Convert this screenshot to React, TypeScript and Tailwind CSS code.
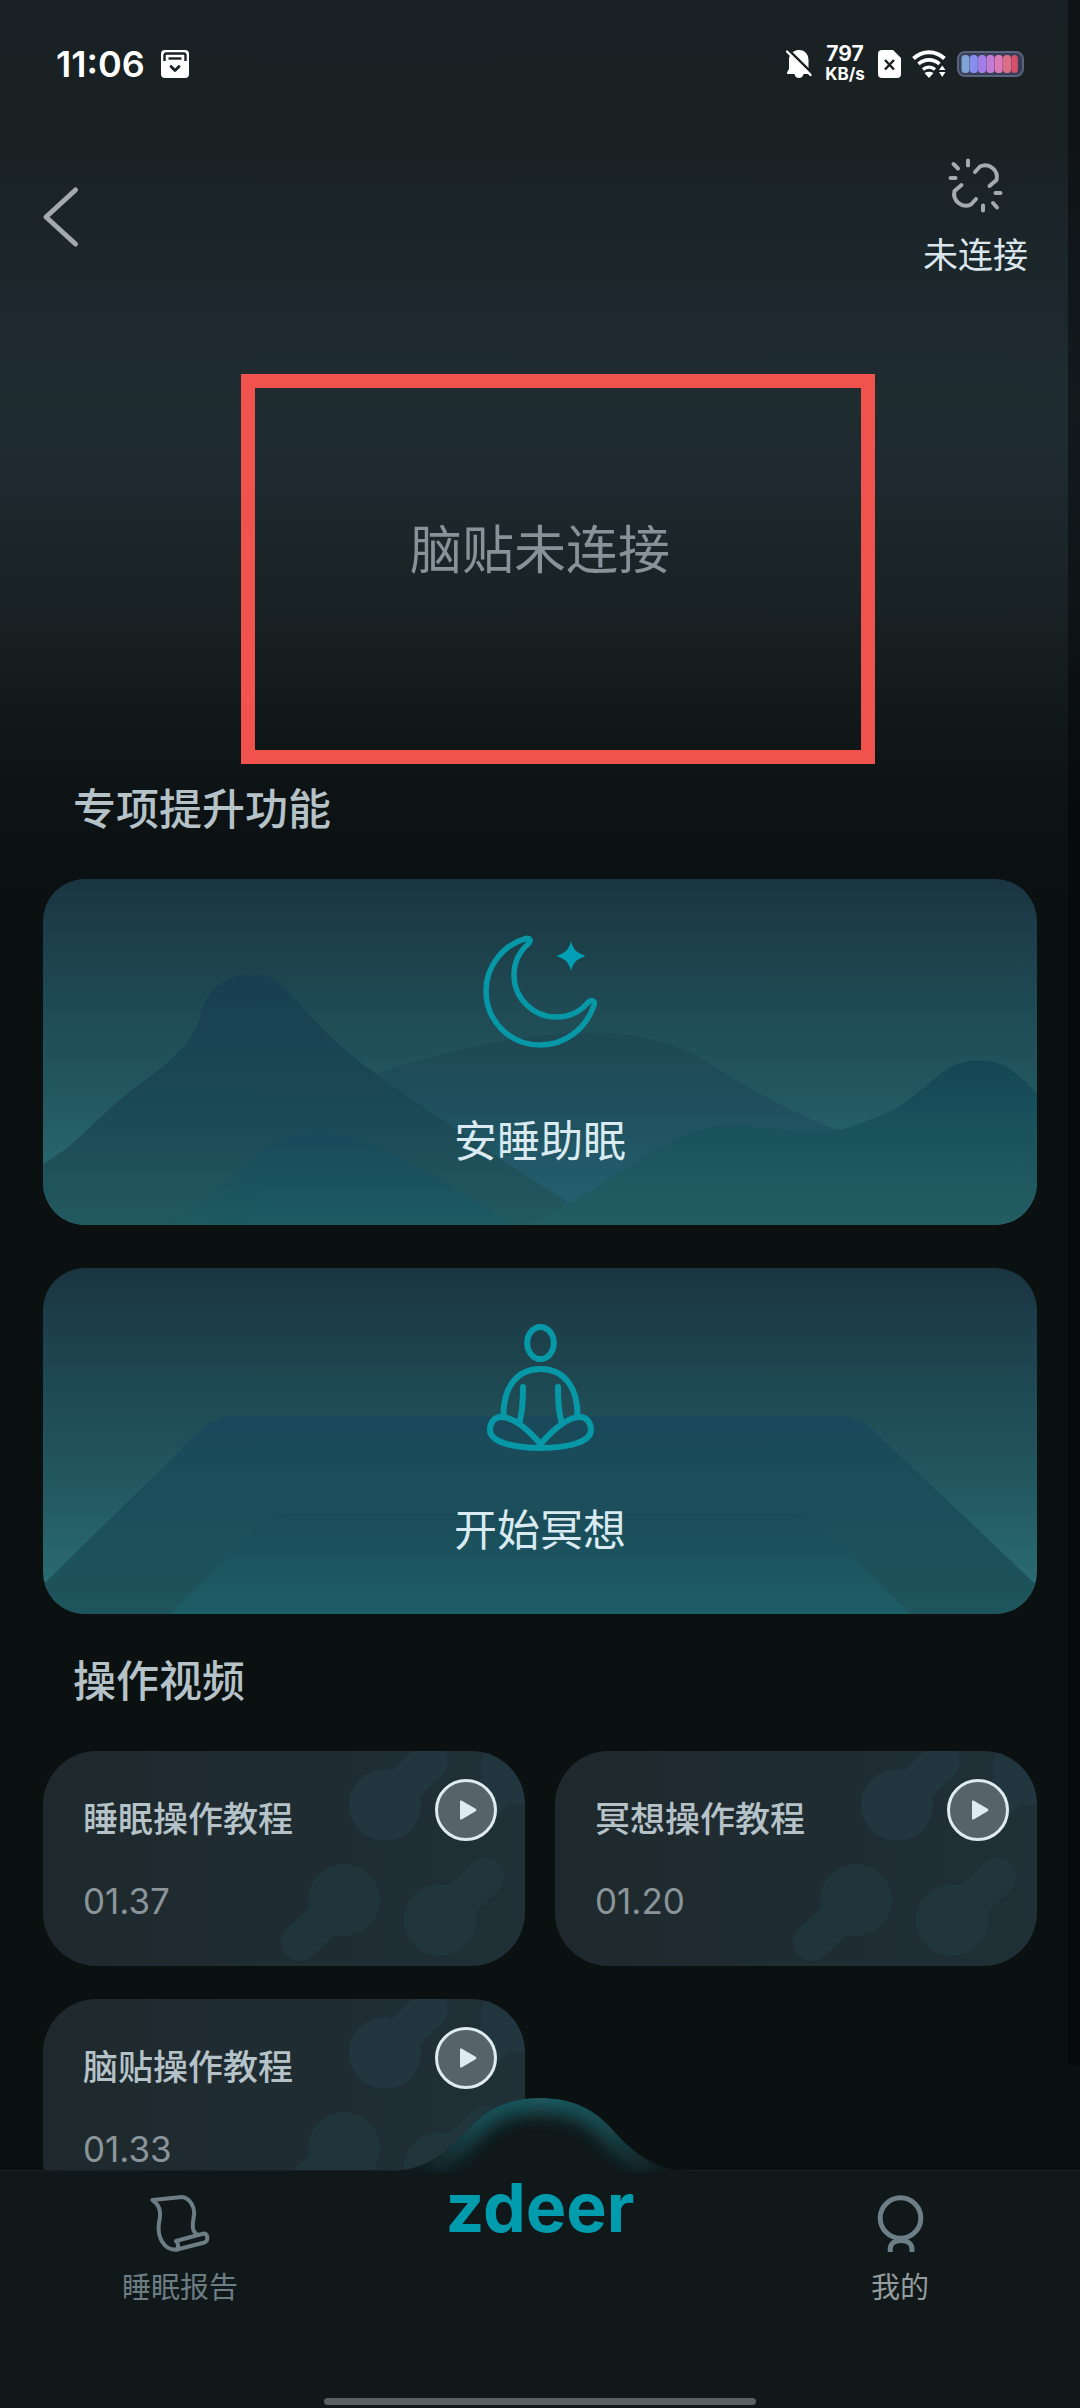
import React from 'react';

interface IconProps {
    className?: string;
}

const AgendaIcon: React.FC<IconProps> = ({ className }) => (
    <svg className={className} viewBox="0 0 28 28" fill="none">
        <rect width="28" height="28" rx="4" fill="#fff" />
        <path d="M3.500 11V5.500Q3.500 3.500 5.500 3.500H22.500Q24.500 3.500 24.500 5.500V11" stroke="#192124" strokeWidth="2.400" />
        <path d="M7.500 8.500H20.500" stroke="#192124" strokeWidth="2.400" />
        <path d="M10 16.500L14 20.500L18 16.500" stroke="#192124" strokeWidth="2.800" strokeLinecap="round" strokeLinejoin="round" />
    </svg>
);

const BellOffIcon: React.FC<IconProps> = ({ className }) => (
    <svg className={className} viewBox="0 0 26 30" fill="none">
        <path d="M3 9C5 3 9 1 13 1C19 1 22.500 5.500 22.500 11V20L25 23.500Q25 25 23.500 25H17.500C17 27.500 15.500 29 13 29S9 27.500 8.500 25H1.500Q0.500 24.500 1.200 23L3 20Z" fill="#fff" />
        <path d="M3 1.500L26 24" stroke="#192124" strokeWidth="2.600" />
        <path d="M1 2.500L24.500 26" stroke="#fff" strokeWidth="2.400" strokeLinecap="round" />
    </svg>
);

const SimIcon: React.FC<IconProps> = ({ className }) => (
    <svg className={className} viewBox="0 0 23 28" fill="none">
        <path d="M4 0H15L23 8V24Q23 28 19 28H4Q0 28 0 24V4Q0 0 4 0Z" fill="#fff" />
        <path d="M7 10L16 19.500M16 10L7 19.500" stroke="#192124" strokeWidth="2.500" />
    </svg>
);

const WifiIcon: React.FC<IconProps> = ({ className }) => (
    <svg className={className} viewBox="0 0 34 28" fill="none">
        <path d="M1.500 8.500C10.500 0 23.500 0 32.500 8.500" stroke="#fff" strokeWidth="4" />
        <path d="M6.500 14C12.500 8.500 21.500 8.500 27.500 14" stroke="#fff" strokeWidth="3.600" />
        <path d="M11 19.500C14.500 16.300 19.500 16.300 23 19.500" stroke="#fff" strokeWidth="3.400" />
        <path d="M12.500 23Q17 20.500 21.500 23L17 28Z" fill="#fff" />
        <path d="M27 20L30.200 15.500L33.500 20ZM27 22L30.200 27L33.500 22Z" fill="#fff" />
    </svg>
);

const batteryColors = ['#7fa3d6', '#8a8df0', '#a47ee6', '#c47bd6', '#dc7ab8', '#dc6f86', '#d9506a'];

const BatteryIcon: React.FC<IconProps> = ({ className }) => (
    <svg className={className} viewBox="0 0 67 26">
        <rect x="1" y="1" width="65" height="24" rx="7" fill="#363f56" stroke="#5a617c" strokeWidth="2" />
        {batteryColors.map((color, i) => (
            <rect key={color} x={4.5 + i * 8.3} y="4" width={i === 6 ? 6.5 : 8} height="18" rx="3.5" fill={color} />
        ))}
    </svg>
);

const UnlinkIcon: React.FC<IconProps> = ({ className }) => (
    <svg className={className} viewBox="0 0 55 55" fill="none" stroke="currentColor" strokeWidth="4" strokeLinecap="round" strokeLinejoin="round">
        <path d="M27 14L32 8.500A11.800 11.800 0 0 1 48.500 22L41.500 28" />
        <path d="M28 41L23 46.500A11.800 11.800 0 0 1 6.500 33L13.500 27" />
        <path d="M20 2.500V7.500M5.500 6L10 10.500M2.500 20H7.500M35 47.500V52.500M45 45L49 49.500M47.500 35H52.500" />
    </svg>
);

const MoonIcon: React.FC<IconProps> = ({ className }) => (
    <svg className={className} viewBox="0 0 114 113" fill="none">
        <path
            d="M43 3.500C20 10 3 31 3 56C3 86 27 110 57 110C82 110 103 94 111 70C112.500 66 108.500 64 105 67.500C97 77 85 82 73 82C50 82 31 63 31 40C31 28 36 17 45.500 8.500C48.500 5.500 47 2.500 43 3.500Z"
            stroke="#0798a8"
            strokeWidth="5.500"
            strokeLinejoin="round"
        />
        <path d="M88 6.500Q90 13 93 16Q96 18.500 102.500 21Q96 23.500 93 26Q90 29 88 35.500Q86 29 83 26Q80 23.500 73.500 21Q80 18.500 83 16Q86 13 88 6.500Z" fill="#009fb5" />
    </svg>
);

const MeditateIcon: React.FC<IconProps> = ({ className }) => (
    <svg className={className} viewBox="0 0 107 127" fill="none" stroke="#0798a8" strokeWidth="6" strokeLinecap="round" strokeLinejoin="round">
        <ellipse cx="53.5" cy="19" rx="13.3" ry="16" />
        <path d="M16.500 91C16.500 63 30 45 53.500 45S90.500 63 90.500 91" />
        <path d="M36 63C36 78 35.500 88 32.500 98M71 63C71 78 71.500 88 74.500 98" />
        <path d="M53.500 120C43 108 27 93 14 93C7 93 3 99 3 106C3 118 26 124 53.500 124S104 118 104 106C104 99 100 93 93 93C80 93 64 108 53.500 120Z" />
    </svg>
);

const ReportIcon: React.FC<IconProps> = ({ className }) => (
    <svg className={className} viewBox="0 0 60 57" fill="none" stroke="currentColor" strokeWidth="4" strokeLinecap="round" strokeLinejoin="round">
        <path d="M2.500 5L32 2C40 3 45 12 44 20C42.500 30 41 36 48 40L54.500 38.500C58 39.500 58.500 46 54.500 47.500L27 54.500C14 56 7 42 9 28C11 19 11 11 2.500 5Z" />
        <path d="M48 40L26 46C28 48 29 51 27 54.500" />
    </svg>
);

const PersonIcon: React.FC<IconProps> = ({ className }) => (
    <svg className={className} viewBox="0 0 47 57" fill="none" stroke="currentColor" strokeWidth="5">
        <circle cx="23.5" cy="23" r="20.300" />
        <path d="M13.200 57V54C13.200 49 17 45.500 24 45.500S35 49 35 54V57" />
    </svg>
);

const MountainScene: React.FC = () => (
    <svg className="absolute inset-0 h-full w-full" viewBox="0 0 994 346" preserveAspectRatio="none">
        <defs>
            <linearGradient id="hillBack" x1="0" y1="154" x2="0" y2="330" gradientUnits="userSpaceOnUse">
                <stop offset="0" stopColor="#1e4852" />
                <stop offset="0.400" stopColor="#1f4f5d" />
                <stop offset="1" stopColor="#256070" />
            </linearGradient>
            <linearGradient id="hillLeft" x1="0" y1="96" x2="0" y2="346" gradientUnits="userSpaceOnUse">
                <stop offset="0" stopColor="#183f50" />
                <stop offset="0.500" stopColor="#1b4855" />
                <stop offset="1" stopColor="#22595f" />
            </linearGradient>
            <linearGradient id="hillRight" x1="0" y1="182" x2="0" y2="346" gradientUnits="userSpaceOnUse">
                <stop offset="0" stopColor="#134654" />
                <stop offset="0.400" stopColor="#1a525c" />
                <stop offset="1" stopColor="#235d62" />
            </linearGradient>
            <linearGradient id="hillFront" x1="0" y1="252" x2="0" y2="346" gradientUnits="userSpaceOnUse">
                <stop offset="0" stopColor="#184a5a" />
                <stop offset="1" stopColor="#1c5a62" />
            </linearGradient>
            <linearGradient id="hillFade" x1="110" y1="0" x2="220" y2="0" gradientUnits="userSpaceOnUse">
                <stop offset="0" stopColor="#fff" stopOpacity="0" />
                <stop offset="1" stopColor="#fff" />
            </linearGradient>
            <mask id="frontMask">
                <rect width="994" height="346" fill="url(#hillFade)" />
            </mask>
        </defs>
        <path d="M300 205C360 186 450 154 549 154C600 154 640 166 669 186C710 213 760 238 800 253V346H300Z" fill="url(#hillBack)" />
        <path d="M0 285C24 271 30 264 60 236C85 212 105 200 125 183C145 165 152 155 158 134C164 112 180 96 206 96C232 94 240 106 262 131C285 157 305 175 332 194C365 220 420 252 459 281L560 346H0Z" fill="url(#hillLeft)" />
        <path d="M488 346L528 323C560 306 600 276 635 259C660 247 690 244 721 248C750 253 775 256 800 250C830 240 850 234 869 218L900 193C920 178 952 177 972 194Q984 203 994 214V346Z" fill="url(#hillRight)" />
        <path d="M110 346C170 320 205 280 235 262C262 248 295 250 320 262C380 284 420 318 472 346Z" fill="url(#hillFront)" mask="url(#frontMask)" />
    </svg>
);

const MatScene: React.FC = () => (
    <svg className="absolute inset-0 h-full w-full" viewBox="0 0 994 346" preserveAspectRatio="none">
        <defs>
            <linearGradient id="matOuter" x1="0" y1="148" x2="0" y2="346" gradientUnits="userSpaceOnUse">
                <stop offset="0" stopColor="#19495a" />
                <stop offset="1" stopColor="#1e545b" />
            </linearGradient>
            <linearGradient id="matInner" x1="0" y1="245" x2="0" y2="346" gradientUnits="userSpaceOnUse">
                <stop offset="0" stopColor="#1a4b59" />
                <stop offset="1" stopColor="#1e5e67" />
            </linearGradient>
        </defs>
        <path d="M-30 346L158 162Q172 148 190 148H795Q815 148 830 162L1024 346Z" fill="url(#matOuter)" />
        <path d="M128 346L208 265Q228 245 248 245H744Q768 245 785 265L867 346Z" fill="url(#matInner)" />
    </svg>
);

const PatchPattern: React.FC = () => (
    <svg className="absolute right-0 top-0 h-[215px] w-[482px]" viewBox="0 0 482 215" strokeWidth="38" strokeLinecap="round">
        <g fill="#21363f" stroke="#21363f">
            <circle cx="342" cy="54" r="36" stroke="none" />
            <path d="M355 41L386 10" />
            <circle cx="475" cy="17" r="37" stroke="none" />
            <path d="M475 17L428 64" />
        </g>
        <g fill="#20343b" stroke="#20343b">
            <circle cx="301" cy="149" r="36" stroke="none" />
            <path d="M301 149L257 191" />
        </g>
        <g fill="#21363c" stroke="#21363c">
            <circle cx="397" cy="169" r="36" stroke="none" />
            <path d="M397 169L442 126" />
        </g>
    </svg>
);

// Raised hump of the tab bar with the teal inner glow
const NavHump: React.FC = () => (
    <svg className="absolute bottom-full left-1/2 -mb-px h-[74px] w-[310px] -translate-x-1/2" viewBox="0 0 310 74">
        <defs>
            <clipPath id="humpClip">
                <path d="M0 74C40 73 62 55 84 30C104 8 128 0 155 0S206 8 226 30C248 55 270 73 310 74Z" />
            </clipPath>
            <linearGradient id="humpGlow" x1="0" y1="0" x2="310" y2="0" gradientUnits="userSpaceOnUse">
                <stop offset="0.100" stopColor="#17555c" stopOpacity="0" />
                <stop offset="0.300" stopColor="#17555c" stopOpacity="0.900" />
                <stop offset="0.500" stopColor="#1a5c62" />
                <stop offset="0.700" stopColor="#17555c" stopOpacity="0.900" />
                <stop offset="0.900" stopColor="#17555c" stopOpacity="0" />
            </linearGradient>
            <filter id="humpBlur" x="-20%" y="-60%" width="140%" height="220%">
                <feGaussianBlur stdDeviation="9" />
            </filter>
        </defs>
        <g clipPath="url(#humpClip)">
            <rect width="310" height="74" fill="#11181a" />
            <path
                d="M0 70C40 69 60 51 82 26C102 4 128 -4 155 -4S208 4 228 26C250 51 270 69 310 70"
                fill="none"
                stroke="url(#humpGlow)"
                strokeWidth="36"
                filter="url(#humpBlur)"
            />
        </g>
    </svg>
);

interface FeatureCardProps {
    title: string;
    icon: React.ReactNode;
    scene: React.ReactNode;
}

const FeatureCard: React.FC<FeatureCardProps> = ({ title, icon, scene }) => (
    <button className="relative flex h-[346px] w-full flex-col items-center overflow-hidden rounded-[42px] bg-[linear-gradient(180deg,#1a3541_0%,#1f4b54_38%,#22565f_60%,#2a6a71_90%)] pt-14">
        {scene}
        <span className="relative flex h-32 items-start">{icon}</span>
        <span className="relative mt-[46px] text-[43px] leading-[64px] text-[#d9eaf1]">{title}</span>
    </button>
);

interface VideoCardProps {
    title: string;
    duration: string;
}

const VideoCard: React.FC<VideoCardProps> = ({ title, duration }) => (
    <button className="relative flex h-[215px] items-start justify-between overflow-hidden rounded-[54px] bg-linear-to-r from-[#1f292d] to-[#1f3037] pl-10 pr-7 pt-7 text-left">
        <PatchPattern />
        <span className="relative flex flex-col gap-10 pt-4">
            <span className="text-[35px] font-medium leading-[48px] text-[#b5c2c8]">{title}</span>
            <span className="text-[35px] leading-9 text-[#8a9499]">{duration}</span>
        </span>
        <span className="relative flex size-[62px] items-center justify-center rounded-full border-[3px] border-[#dfebf0] bg-[#566469]">
            <svg className="ml-1 h-5 w-[18px]" viewBox="0 0 18 20" fill="#dfebf0">
                <path d="M1 1.500Q1 0 2.500 0.600L17 9Q18 10 17 11L2.500 19.400Q1 20 1 18.500Z" />
            </svg>
        </span>
    </button>
);

const videos: VideoCardProps[] = [
    { title: '睡眠操作教程', duration: '01.37' },
    { title: '冥想操作教程', duration: '01.20' },
    { title: '脑贴操作教程', duration: '01.33' },
];

const SectionTitle: React.FC<{ children: React.ReactNode }> = ({ children }) => (
    <h2 className="mb-[38px] mt-[35px] px-[30px] text-[43px] font-medium leading-[64px] text-[#b5c2c8]">{children}</h2>
);

const StatusBar: React.FC = () => (
    <div className="flex items-center justify-between px-14 pt-12 text-white">
        <div className="flex h-8 items-center gap-4">
            <span className="text-[36px] font-semibold leading-8">11:06</span>
            <AgendaIcon className="size-7" />
        </div>
        <div className="flex h-8 items-center">
            <BellOffIcon className="mr-3.5 h-[30px] w-[26px]" />
            <span className="mr-3.5 flex w-[38px] flex-col items-center font-bold">
                <span className="text-[21px] leading-5">797</span>
                <span className="text-[17px] leading-5">KB/s</span>
            </span>
            <SimIcon className="mr-[11px] h-7 w-[23px]" />
            <WifiIcon className="mr-[11px] h-7 w-[34px]" />
            <BatteryIcon className="h-[26px] w-[67px]" />
        </div>
    </div>
);

const TabBar: React.FC = () => (
    <nav className="relative flex h-[238px] shrink-0 flex-col items-center justify-between border-t border-[#192124] bg-[#11181a] pb-[3px]">
        <NavHump />
        <div className="relative grid w-full grid-cols-3">
            <a href="#report" className="flex flex-col items-center gap-4 pt-6 text-[#6c7d83]">
                <ReportIcon className="h-[57px] w-[60px]" />
                <span className="text-[29px] leading-10">睡眠报告</span>
            </a>
            <a href="#home" className="text-center text-[68px] font-bold leading-[72px] text-[#009cae]">zdeer</a>
            <a href="#mine" className="flex flex-col items-center gap-4 pt-6 text-[#6c7f86]">
                <PersonIcon className="h-[57px] w-[47px]" />
                <span className="text-[29px] leading-10 text-[#969b9e]">我的</span>
            </a>
        </div>
        <div className="h-[7px] w-2/5 rounded-full bg-[#5b6062]" />
    </nav>
);

const App: React.FC = () => {
    return (
        <div className="flex h-screen flex-col overflow-hidden bg-[#0b1111] font-['Inter','Noto_Sans_CJK_SC',sans-serif]">
            <div className="relative flex-1 overflow-hidden bg-[linear-gradient(180deg,#192124_0px,#192123_150px,#1c272c_270px,#1f2c30_400px,#1e2a2f_480px,#1a2427_570px,#171f21_640px,#11181a_720px,#0d1315_800px,#0b1111_900px)]">
                <StatusBar />
                <header className="mt-[78px] flex items-center justify-between pl-[42px] pr-[52px]">
                    <button aria-label="返回" className="text-[#a3a9ac]">
                        <svg className="h-[62px] w-[38px]" viewBox="0 0 38 62" fill="none" stroke="currentColor" strokeWidth="5" strokeLinecap="round" strokeLinejoin="round">
                            <path d="M33.500 4L4 31L33.500 58" />
                        </svg>
                    </button>
                    <button className="flex flex-col items-center gap-[22px]">
                        <UnlinkIcon className="size-[55px] text-[#a3abae]" />
                        <span className="text-[35px] leading-10 text-[#dbe6ec]">未连接</span>
                    </button>
                </header>
                <section className="relative flex h-[467px] items-center justify-center pt-[84px]">
                    <p className="text-[52px] leading-[76px] text-[#879398]">脑贴未连接</p>
                    <div className="absolute -bottom-[22px] left-[241px] right-[205px] top-[99px] border-[14px] border-[#f0534d]" />
                </section>
                <main className="px-[43px]">
                    <SectionTitle>专项提升功能</SectionTitle>
                    <div className="flex flex-col gap-[43px]">
                        <FeatureCard title="安睡助眠" icon={<MoonIcon className="h-[113px] w-[114px]" />} scene={<MountainScene />} />
                        <FeatureCard title="开始冥想" icon={<MeditateIcon className="h-[127px] w-[107px]" />} scene={<MatScene />} />
                    </div>
                    <SectionTitle>操作视频</SectionTitle>
                    <div className="grid grid-cols-2 gap-x-[30px] gap-y-[33px]">
                        {videos.map(video => (
                            <VideoCard key={video.title} {...video} />
                        ))}
                    </div>
                </main>
                {/* edge shade of the scroll area */}
                <div className="absolute bottom-[105px] right-0 top-0 w-3 bg-black/40" />
            </div>
            <TabBar />
        </div>
    );
};

export default App;
